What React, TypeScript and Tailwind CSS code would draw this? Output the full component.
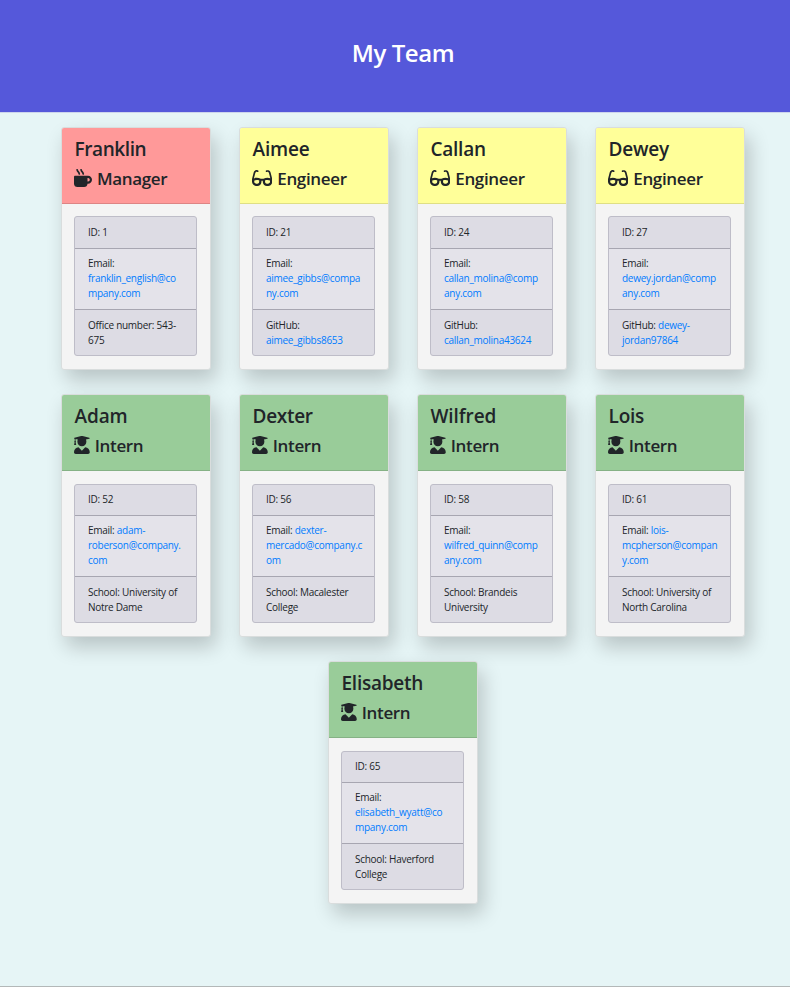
import React from "react";
import { FaMugHot, FaGlasses, FaUserGraduate } from "react-icons/fa";

type Role = "Manager" | "Engineer" | "Intern";

interface Member {
  name: string;
  nameSpacing: string;
  role: Role;
  id: number;
  label: string;
  email: string[];
  extra: string[];
  link?: string[];
}

const members: Member[] = [
  { name: "Franklin", nameSpacing: "tracking-[-0.4px]", role: "Manager", id: 1, label: "Email:", email: ["", "franklin_english@co", "mpany.com"], extra: ["Office number: 543-", "675"] },
  { name: "Aimee", nameSpacing: "tracking-[-0.15px]", role: "Engineer", id: 21, label: "Email:", email: ["", "aimee_gibbs@compa", "ny.com"], extra: ["GitHub:", ""], link: ["", "aimee_gibbs8653"] },
  { name: "Callan", nameSpacing: "tracking-[-0.25px]", role: "Engineer", id: 24, label: "Email:", email: ["", "callan_molina@comp", "any.com"], extra: ["GitHub:", ""], link: ["", "callan_molina43624"] },
  { name: "Dewey", nameSpacing: "tracking-[-0.2px]", role: "Engineer", id: 27, label: "Email:", email: ["", "dewey.jordan@comp", "any.com"], extra: ["GitHub: ", ""], link: ["dewey-", "jordan97864"] },
  { name: "Adam", nameSpacing: "tracking-[-0.1px]", role: "Intern", id: 52, label: "Email: ", email: ["adam-", "roberson@company.", "com"], extra: ["School: University of", "Notre Dame"] },
  { name: "Dexter", nameSpacing: "tracking-[-0.3px]", role: "Intern", id: 56, label: "Email: ", email: ["dexter-", "mercado@company.c", "om"], extra: ["School: Macalester", "College"] },
  { name: "Wilfred", nameSpacing: "tracking-[-0.1px]", role: "Intern", id: 58, label: "Email:", email: ["", "wilfred_quinn@comp", "any.com"], extra: ["School: Brandeis", "University"] },
  { name: "Lois", nameSpacing: "tracking-[-0.2px]", role: "Intern", id: 61, label: "Email: ", email: ["lois-", "mcpherson@compan", "y.com"], extra: ["School: University of", "North Carolina"] },
  { name: "Elisabeth", nameSpacing: "tracking-[-0.25px]", role: "Intern", id: 65, label: "Email:", email: ["", "elisabeth_wyatt@co", "mpany.com"], extra: ["School: Haverford", "College"] },
];

const headerColor: Record<Role, string> = {
  Manager: "bg-[#ff9999] border-[#dd8484]",
  Engineer: "bg-[#ffff99] border-[#dfdf85]",
  Intern: "bg-[#99cc99] border-[#85b185]",
};

const icons = {
  Manager: { Icon: FaMugHot, size: "w-[18px]" },
  Engineer: { Icon: FaGlasses, size: "w-[20.25px]" },
  Intern: { Icon: FaUserGraduate, size: "w-[15.75px]" },
};

function Card({ m }: { m: Member }) {
  const { Icon, size } = icons[m.role];
  const intern = m.role === "Intern";
  return (
    <article className="h-[243px] w-[150px] rounded-[3px] border border-[#d9dddd] bg-[#f4f4f4] shadow-[5px_10px_20px_rgba(0,0,0,0.2)]">
      <header className={`h-[76px] rounded-t-[2px] border-b pl-3 pt-[9px] ${headerColor[m.role]}`}>
        <h2 className={`h-6 whitespace-nowrap pl-[0.5px] text-[19px] leading-6 font-[550] ${m.nameSpacing}`}>{m.name}</h2>
        <h3 className="mt-[6px] flex h-[22px] items-center gap-[5px] whitespace-nowrap text-[17px] leading-6 font-[550] tracking-[-0.35px]">
          <Icon className={`h-[18px] shrink-0 ${size}`} />
          <span className="pt-[2px]">{m.role}</span>
        </h3>
      </header>
      <ul className={`ml-3 mr-[13px] overflow-hidden rounded-[3px] border border-[#bebdc8] bg-[#dddce4] text-[10px] leading-[15px] tracking-[-0.27px] ${intern ? "mt-[13px] h-[139px]" : "mt-3 h-[140px]"}`}>
        <li className={`border-b border-[#a7a6b1] pl-[13px] ${intern ? "h-[31px] pt-[7px]" : "h-8 pt-2"}`}>ID: {m.id}</li>
        <li className="h-[61px] whitespace-pre border-b border-[#a7a6b1] bg-[#e4e3ea] pl-[13px] pt-[7px]">
          {m.email.map((line, i) => (
            <div key={i}>
              {i === 0 && m.label}
              <a className="text-[#007bff]">{line}</a>
            </div>
          ))}
        </li>
        <li className="h-[45px] whitespace-pre pl-[13px] pt-2">
          {m.extra.map((line, i) => (
            <div key={i}>
              {line}
              {m.link && <a className="text-[#007bff]">{m.link[i]}</a>}
            </div>
          ))}
        </li>
      </ul>
    </article>
  );
}

export default function App() {
  return (
    <div className="flex h-[987px] w-[790px] flex-col overflow-hidden border-b border-[#b3b8b8] bg-[#e6f5f6] font-['Open_Sans','Noto_Sans',sans-serif] text-[#212529]">
      <header className="flex h-[113px] shrink-0 justify-center border-b border-[#cdd5ec] bg-[#5558da] pl-4 pt-9">
        <h1 className="h-8 text-[24px] leading-[34px] font-semibold tracking-[-0.4px] text-white">My Team</h1>
      </header>
      <main className="ml-[61px] mt-[14px] flex w-[684px] flex-wrap justify-center gap-x-7 gap-y-6">
        {members.map((m) => (
          <Card key={m.id} m={m} />
        ))}
      </main>
    </div>
  );
}
